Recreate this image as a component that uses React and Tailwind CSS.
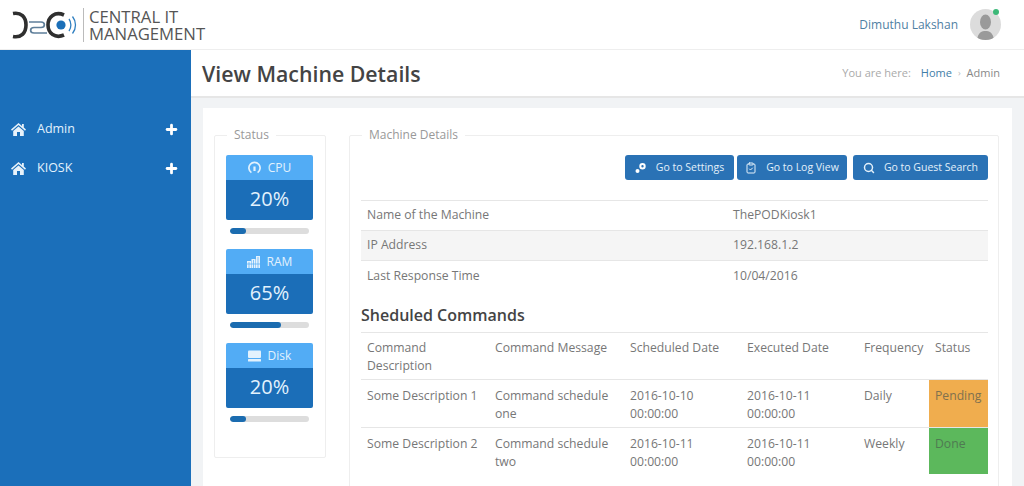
import React from 'react';
import { Plus, ClipboardCheck, Search } from 'lucide-react';

const stats = [
    { name: 'CPU', value: 20, icon: 'cpu' },
    { name: 'RAM', value: 65, icon: 'ram' },
    { name: 'Disk', value: 20, icon: 'disk' },
];

const commands = [
    { desc: 'Some Description 1', msg: 'Command schedule one', sched: '2016-10-10 00:00:00', exec: '2016-10-11 00:00:00', freq: 'Daily', status: 'Pending', color: 'bg-[#f0ad4e] text-[#80714f]' },
    { desc: 'Some Description 2', msg: 'Command schedule two', sched: '2016-10-11 00:00:00', exec: '2016-10-11 00:00:00', freq: 'Weekly', status: 'Done', color: 'bg-[#5cb85c] text-[#4f7a52]' },
];

function Logo() {
    return (
        <svg width="66" height="28" viewBox="0 0 66 28" fill="none">
            <path d="M1 2.5 C9 1 14 6 14 14 C14 22 9 27 1 25.5" stroke="#2f2f2f" strokeWidth="3.6" />
            <path d="M17 11 L29 11 C33.5 11 33.5 16.5 29 16.5 L22 16.5 C17.5 16.5 17.5 22 22 22 L35 22" stroke="#5f7f9a" strokeWidth="1.7" />
            <path d="M52 4 C43 0 36 6 36 14 C36 22 43 28 52 24" stroke="#2f2f2f" strokeWidth="3.6" />
            <circle cx="49" cy="14" r="4.6" fill="#1b6fb8" />
            <path d="M57 8 C59.5 11.5 59.5 16.5 57 20" stroke="#2f7fc0" strokeWidth="1.3" />
            <path d="M60.5 5.5 C64.5 10.5 64.5 17.5 60.5 22.5" stroke="#2f7fc0" strokeWidth="1.3" />
        </svg>
    );
}

function HomeIcon() {
    return (
        <svg width="15" height="13" viewBox="0 0 15 13" fill="#e8f2fa">
            <path d="M7.5 0 L11 3 V1 H12.8 V4.6 L15 6.6 L14 7.7 L7.5 2.1 L1 7.7 L0 6.6 Z" />
            <path d="M7.5 3.4 L12.8 8 V13 H9 V9 H6 V13 H2.2 V8 Z" />
        </svg>
    );
}

function GaugeIcon() {
    return (
        <svg width="13" height="13" viewBox="0 0 13 13" fill="none" stroke="#e3f2fd">
            <path d="M3.4 11.6 A5.6 5.6 0 1 1 9.6 11.6" strokeWidth="1.7" />
            <path d="M6.5 5.5 V10" strokeWidth="2.2" />
        </svg>
    );
}

function RamIcon() {
    return (
        <svg width="13" height="12" viewBox="0 0 13 12" fill="#e3f2fd">
            <path d="M0 5 L4 5 V12 H0 Z M4.5 3 H8.5 V12 H4.5 Z M9 0 H13 V12 H9 Z" />
            <path d="M0 8 H13 M2 6 V12 M6.5 4 V12 M11 1 V12" stroke="#52acf5" strokeWidth="0.7" />
        </svg>
    );
}

function DiskIcon() {
    return (
        <svg width="13" height="12" viewBox="0 0 13 12" fill="#e3f2fd">
            <rect x="0" y="0.5" width="13" height="7.5" rx="1" />
            <rect x="0" y="9" width="13" height="2.5" rx="0.5" />
        </svg>
    );
}

function SettingsDots() {
    return (
        <svg width="12" height="12" viewBox="0 0 12 12" fill="#fff">
            <path fillRule="evenodd" d="M7.5 1a3.2 3.2 0 1 1 0 6.4 3.2 3.2 0 0 1 0-6.4zm0 2a1.2 1.2 0 1 0 0 2.4 1.2 1.2 0 0 0 0-2.4z" />
            <circle cx="2.5" cy="9" r="2" />
        </svg>
    );
}

function StatBox({ stat }) {
    return (
        <div>
            <div className="rounded-[2px] overflow-hidden text-[#e3f2fd]">
                <div className="h-[25px] bg-[#52acf5] flex items-center justify-center gap-[7px] text-[12px]">
                    {stat.icon === 'cpu' && <GaugeIcon />}
                    {stat.icon === 'ram' && <RamIcon />}
                    {stat.icon === 'disk' && <DiskIcon />}
                    <span>{stat.name}</span>
                </div>
                <div className="h-[40px] pb-[2px] bg-[#1b6eb8] flex items-center justify-center text-[20px]">{stat.value}%</div>
            </div>
            <div className="mx-1 mt-2 h-[6px] rounded-full bg-[#dddddd] overflow-hidden">
                <div className="h-full rounded-full bg-[#1b6cb0]" style={{ width: `${stat.value}%` }} />
            </div>
        </div>
    );
}

function SideItem({ label }) {
    return (
        <div className="h-[39px] flex items-center justify-between pl-[11px] pr-[12px] text-[12.5px] text-[#e3f2fd]">
            <div className="flex items-center gap-[11px]">
                <HomeIcon />
                <span>{label}</span>
            </div>
            <Plus className="w-[15px] h-[15px] text-white" strokeWidth={4.5} />
        </div>
    );
}

function ActionButton({ icon, label, width }) {
    return (
        <button className={`h-[25px] ${width} rounded-[3px] bg-[#2a72b5] text-[#e3f0fa] text-[10.5px] flex items-center justify-center gap-[9px]`}>
            {icon}
            <span>{label}</span>
        </button>
    );
}

export default function App() {
    return (
        <div className="w-[1024px] h-[486px] overflow-hidden bg-[#f1f3f5] text-[#777777] flex flex-col font-['Open_Sans',sans-serif]">
            <header className="h-[50px] shrink-0 bg-white border-b border-[#eeeeee] flex items-center justify-between pl-[12px] pr-[23px]">
                <div className="flex items-center">
                    <Logo />
                    <div className="ml-[5px] pl-[5px] border-l border-[#bbbbbb] text-[16.7px] leading-[17px] text-[#555555] h-[34px] flex flex-col justify-center">
                        <div>CENTRAL IT</div>
                        <div>MANAGEMENT</div>
                    </div>
                </div>
                <div className="flex items-center gap-[12px]">
                    <span className="text-[12px] text-[#4f7fa3]">Dimuthu Lakshan</span>
                    <div className="relative w-[31px] h-[31px]">
                        <div className="w-full h-full rounded-full bg-[#dcdcdc] overflow-hidden">
                            <svg width="31" height="31" viewBox="0 0 31 31" fill="#9a9a9a">
                                <ellipse cx="15.5" cy="13" rx="5.5" ry="7.5" />
                                <path d="M7 31 C8 23 12 22 15.5 22 C19 22 23 23 24 31 Z" />
                            </svg>
                        </div>
                        <span className="absolute top-0 right-[2px] w-[6px] h-[6px] rounded-full bg-[#3cb878]" />
                    </div>
                </div>
            </header>

            <div className="flex flex-1 min-h-0">
                <aside className="w-[191px] shrink-0 bg-[#1b6fba] pt-[60px]">
                    <SideItem label="Admin" />
                    <SideItem label="KIOSK" />
                </aside>

                <main className="flex-1 min-w-0 flex flex-col">
                    <div className="h-[48px] shrink-0 bg-white border-b-2 border-[#e6e6e6] flex items-center justify-between pl-[11px] pr-[24px]">
                        <h1 className="pt-[2px] text-[21.3px] font-semibold text-[#444444]">View Machine Details</h1>
                        <div className="flex items-center text-[11px] text-[#aaaaaa]">
                            <span>You are here:</span>
                            <span className="ml-[10px] text-[#3f7ea8]">Home</span>
                            <span className="mx-[6px] text-[#bbbbbb] text-[9px]">›</span>
                            <span className="text-[#888888]">Admin</span>
                        </div>
                    </div>

                    <div className="ml-[12px] mr-[12px] mt-[10px] flex-1 bg-white flex gap-[23px] pl-[11px] pr-[13px] pt-[20px] overflow-hidden">
                        <fieldset className="w-[112px] h-[330px] shrink-0 border border-[#eeeeee] rounded-[2px] pl-[11px] pr-[12px] pt-[13px]">
                            <legend className="ml-[1px] px-[7px] text-[12px] leading-[14px] text-[#999999]">Status</legend>
                            <div className="flex flex-col gap-[15px]">
                                {stats.map((stat) => (
                                    <StatBox key={stat.name} stat={stat} />
                                ))}
                            </div>
                        </fieldset>

                        <fieldset className="flex-1 min-w-0 h-[400px] border border-[#eeeeee] rounded-[2px] pl-[11px] pr-[10px] pt-[13px]">
                            <legend className="ml-[1px] px-[7px] text-[12px] leading-[14px] text-[#999999]">Machine Details</legend>
                            <div className="flex justify-end gap-[3px]">
                                <ActionButton icon={<SettingsDots />} label="Go to Settings" width="w-[109px]" />
                                <ActionButton icon={<ClipboardCheck className="w-3 h-3" />} label="Go to Log View" width="w-[110px] mr-[3px]" />
                                <ActionButton icon={<Search className="w-3 h-3" strokeWidth={3} />} label="Go to Guest Search" width="w-[135px]" />
                            </div>

                            <div className="mt-[20px] text-[12.2px] border-t border-[#e6e6e6]">
                                <div className="h-[30px] flex items-center border-b border-[#e6e6e6]">
                                    <span className="w-[372px] pl-[6px]">Name of the Machine</span>
                                    <span>ThePODKiosk1</span>
                                </div>
                                <div className="h-[30px] flex items-center border-b border-[#e6e6e6] bg-[#f5f5f5]">
                                    <span className="w-[372px] pl-[6px]">IP Address</span>
                                    <span>192.168.1.2</span>
                                </div>
                                <div className="h-[30px] flex items-center">
                                    <span className="w-[372px] pl-[6px]">Last Response Time</span>
                                    <span>10/04/2016</span>
                                </div>
                            </div>

                            <h2 className="mt-[12px] text-[16px] leading-[24px] font-semibold text-[#444444]">Sheduled Commands</h2>

                            <table className="mt-[5px] w-[627px] table-fixed text-[12.2px] leading-[17.5px] border-t border-[#e6e6e6]">
                                <colgroup>
                                    <col className="w-[128px]" />
                                    <col className="w-[135px]" />
                                    <col className="w-[117px]" />
                                    <col className="w-[117px]" />
                                    <col className="w-[71px]" />
                                    <col className="w-[59px]" />
                                </colgroup>
                                <thead>
                                    <tr className="h-[47px] align-top border-b border-[#e6e6e6]">
                                        {['Command Description', 'Command Message', 'Scheduled Date', 'Executed Date', 'Frequency', 'Status'].map((h) => (
                                            <th key={h} className="font-normal text-left px-[6px] pt-[6px]">{h}</th>
                                        ))}
                                    </tr>
                                </thead>
                                <tbody>
                                    {commands.map((c, i) => (
                                        <tr key={c.desc} className={`align-top ${i === 0 ? 'h-[48px] border-b border-[#e6e6e6]' : 'h-[46px]'}`}>
                                            <td className="px-[6px] pt-[7px]">{c.desc}</td>
                                            <td className="px-[6px] pt-[7px]">{c.msg}</td>
                                            <td className="px-[6px] pt-[7px]">{c.sched}</td>
                                            <td className="px-[6px] pt-[7px]">{c.exec}</td>
                                            <td className="px-[6px] pt-[7px]">{c.freq}</td>
                                            <td className={`px-[6px] pt-[7px] ${c.color}`}>{c.status}</td>
                                        </tr>
                                    ))}
                                </tbody>
                            </table>
                        </fieldset>
                    </div>
                </main>
            </div>
        </div>
    );
}
